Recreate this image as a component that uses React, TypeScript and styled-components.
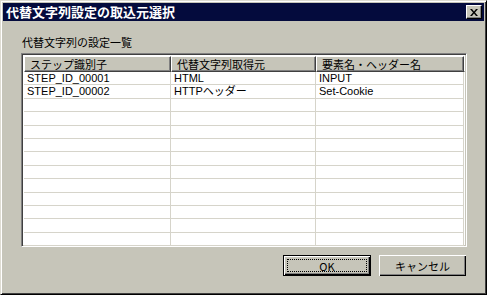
import React from 'react';
import styled, { createGlobalStyle } from 'styled-components';

const face = '#c6c5b9';
const shadow = '#808080';
const darkShadow = '#404040';
const light = '#ffffff';
const gridLine = '#d6d4ca';

const GlobalStyle = createGlobalStyle`
  html, body {
    margin: 0;
    padding: 0;
    background: ${face};
  }
  * {
    box-sizing: border-box;
  }
`;

const Window = styled.div`
  width: 487px;
  height: 295px;
  background: ${face};
  border-top: 1px solid #dedcd2;
  border-left: 1px solid #dedcd2;
  border-right: 1px solid #000;
  border-bottom: 1px solid #000;
  box-shadow: inset 1px 1px 0 ${light}, inset -1px -1px 0 ${darkShadow};
  padding: 2px;
  display: flex;
  flex-direction: column;
  font-family: "Liberation Sans", "Noto Sans CJK JP", sans-serif;
  font-size: 11px;
  color: #000;
`;

const TitleBar = styled.div`
  height: 18px;
  background: #040b3d;
  display: flex;
  align-items: center;
  justify-content: space-between;
  padding: 0 2px 0 3px;
`;

const TitleText = styled.span`
  color: #fff;
  font-family: "Noto Sans CJK JP", sans-serif;
  font-weight: bold;
  font-size: 13px;
  line-height: 18px;
`;

const CloseButton = styled.div`
  width: 16px;
  height: 14px;
  background: ${face};
  border-top: 1px solid ${light};
  border-left: 1px solid ${light};
  border-right: 1px solid #000;
  border-bottom: 1px solid #000;
  box-shadow: inset -1px -1px 0 ${shadow};
  display: flex;
  align-items: center;
  justify-content: center;
`;

const Content = styled.div`
  flex: 1;
  display: flex;
  flex-direction: column;
  padding: 14px 16px 0 18px;
`;

const Label = styled.div`
  height: 14px;
  line-height: 14px;
  font-family: "Noto Sans CJK JP", sans-serif;
  font-size: 11px;
  margin-bottom: 4px;
  padding-left: 1px;
`;

const ListView = styled.div`
  height: 194px;
  width: 446px;
  background: #fff;
  border-top: 1px solid ${shadow};
  border-left: 1px solid ${shadow};
  border-right: 1px solid ${light};
  border-bottom: 1px solid ${light};
  box-shadow: inset 1px 1px 0 ${darkShadow}, inset -1px -1px 0 ${face};
  padding: 2px;
  overflow: hidden;
`;

const HeaderRow = styled.div`
  display: flex;
  height: 16px;
  background: ${face};
`;

const HeaderCell = styled.div<{ $w: number }>`
  width: ${p => p.$w}px;
  flex: none;
  height: 16px;
  line-height: 14px;
  font-family: "Noto Sans CJK JP", sans-serif;
  font-size: 11px;
  padding-left: 5px;
  border-top: 1px solid ${light};
  border-left: 1px solid ${light};
  border-right: 1px solid ${darkShadow};
  border-bottom: 1px solid ${darkShadow};
  box-shadow: inset -1px -1px 0 ${shadow};
  white-space: nowrap;
  overflow: hidden;
`;

const HeaderFill = styled.div`
  flex: 1;
  border-top: 1px solid ${light};
  border-left: 1px solid ${light};
  border-bottom: 1px solid ${darkShadow};
`;

const Row = styled.div`
  display: flex;
  height: 13.4px;
  border-bottom: 1px solid ${gridLine};
`;

const Cell = styled.div<{ $w: number }>`
  width: ${p => p.$w}px;
  flex: none;
  font-size: 11px;
  line-height: 12px;
  padding-left: 3px;
  border-right: 1px solid ${gridLine};
  white-space: nowrap;
`;

const ButtonRow = styled.div`
  display: flex;
  justify-content: flex-end;
  gap: 8px;
  margin-top: 8px;
  padding-right: 2px;
`;

const Button = styled.div<{ $default?: boolean; $w: number }>`
  width: ${p => p.$w}px;
  height: 21px;
  background: ${face};
  display: flex;
  align-items: center;
  justify-content: center;
  font-family: "Noto Sans CJK JP", sans-serif;
  font-size: 11px;
  position: relative;
  border: ${p => (p.$default ? '1px solid #000' : 'none')};
  box-shadow: inset 1px 1px 0 ${light}, inset -1px -1px 0 #000, inset -2px -2px 0 ${shadow};
`;

const FocusRing = styled.div`
  position: absolute;
  inset: 3px;
  border: 1px dotted #000;
`;

const columns = [147, 145, 148];

const rows = [
  ['STEP_ID_00001', 'HTML', 'INPUT'],
  ['STEP_ID_00002', 'HTTPヘッダー', 'Set-Cookie'],
];

const CloseIcon = () => (
  <svg width="8" height="7" viewBox="0 0 8 7">
    <path d="M0 0 L2 0 L4 2.5 L6 0 L8 0 L5 3.5 L8 7 L6 7 L4 4.5 L2 7 L0 7 L3 3.5 Z" fill="#000" />
  </svg>
);

export default function App() {
  const blank = Array.from({ length: 11 }, () => ['', '', '']);
  return (
    <>
      <GlobalStyle />
      <Window>
        <TitleBar>
          <TitleText>代替文字列設定の取込元選択</TitleText>
          <CloseButton>
            <CloseIcon />
          </CloseButton>
        </TitleBar>
        <Content>
          <Label>代替文字列の設定一覧</Label>
          <ListView>
            <HeaderRow>
              <HeaderCell $w={columns[0]}>ステップ識別子</HeaderCell>
              <HeaderCell $w={columns[1]}>代替文字列取得元</HeaderCell>
              <HeaderCell $w={columns[2]}>要素名・ヘッダー名</HeaderCell>
              <HeaderFill />
            </HeaderRow>
            {[...rows, ...blank].map((r, i) => (
              <Row key={i}>
                {r.map((c, j) => (
                  <Cell key={j} $w={columns[j]}>
                    {c}
                  </Cell>
                ))}
              </Row>
            ))}
          </ListView>
          <ButtonRow>
            <Button $default $w={88}>
              OK
              <FocusRing />
            </Button>
            <Button $w={87}>キャンセル</Button>
          </ButtonRow>
        </Content>
      </Window>
    </>
  );
}
